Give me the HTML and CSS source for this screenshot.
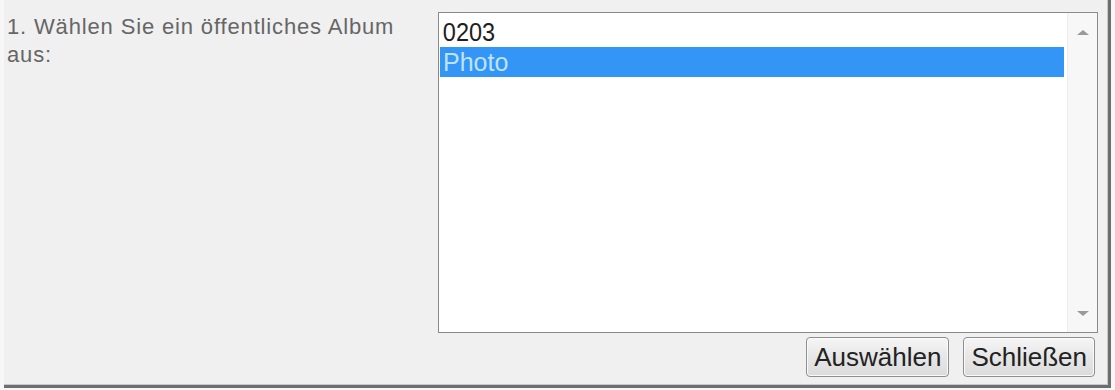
FILE: index.html
```html
<!DOCTYPE html>
<html>
<head>
  <link rel="stylesheet" href="styles.css">
</head>
<body>
  <div class="album-dialog">
    <div class="label">1. Wählen Sie ein öffentliches Album aus:</div>
    <div class="picker">
      <div class="listbox">
        <div class="items">
          <div class="item">0203</div>
          <div class="item selected">Photo</div>
        </div>
        <div class="scrollbar">
          <span class="arrow up"></span>
          <span class="arrow down"></span>
        </div>
      </div>
      <div class="buttons">
        <button>Auswählen</button>
        <button>Schließen</button>
      </div>
    </div>
  </div>
</body>
</html>
```

FILE: styles.css
```css
* {
  margin: 0;
  padding: 0;
  box-sizing: border-box;
}
body {
  background: #f7f7f7;
  width: 1115px;
  height: 390px;
  overflow: hidden;
  font-family: "Liberation Sans", Arial, sans-serif;
}
.album-dialog {
  margin-left: 4px;
  width: 1107px;
  height: 388px;
  background: #f0f0f0;
  border-right: 3px solid #6e6e6e;
  border-bottom: 3px solid #6e6e6e;
  box-shadow: inset -1px -1px 0 #c8c8c8;
  display: grid;
  grid-template-columns: 434px 660px;
  padding-top: 12px;
}
.label {
  padding: 1px 30px 0 3px;
  font-size: 22px;
  line-height: 28px;
  letter-spacing: 0.85px;
  color: #666;
}
.picker {
  display: flex;
  flex-direction: column;
}
.listbox {
  height: 321px;
  background: #fff;
  border: 1px solid #8a8a8a;
  display: flex;
}
.items {
  flex: 1;
  padding: 4px 1px 0 1px;
}
.item {
  font-size: 25px;
  line-height: 30px;
  height: 30px;
  padding-left: 3px;
  color: #1e1e1e;
  transform: scaleX(0.94);
  transform-origin: left;
}
.item.selected {
  background: #3395f5;
  color: #bfe2ff;
  transform: none;
  width: 624px;
}
.scrollbar {
  width: 30px;
  background: #f7f7f7;
  border-left: 1px solid #ececec;
  display: flex;
  flex-direction: column;
  justify-content: space-between;
  align-items: center;
  padding: 17px 0 16px 0;
}
.arrow {
  width: 0;
  height: 0;
  border-left: 6px solid transparent;
  border-right: 6px solid transparent;
}
.arrow.up {
  border-bottom: 5px solid #9a9a9a;
}
.arrow.down {
  border-top: 5px solid #9a9a9a;
}
.buttons {
  display: flex;
  justify-content: flex-end;
  gap: 14px;
  padding: 4px 3px 0 0;
}
.buttons button {
  height: 40px;
  padding: 0 7px;
  font-family: "Liberation Sans", Arial, sans-serif;
  font-size: 26px;
  color: #222;
  background: linear-gradient(#f6f6f6, #e6e6e6 50%, #dcdcdc);
  border: 1px solid #8e8e8e;
  border-radius: 4px;
  box-shadow: inset 0 0 0 1px #fafafa;
}
```
